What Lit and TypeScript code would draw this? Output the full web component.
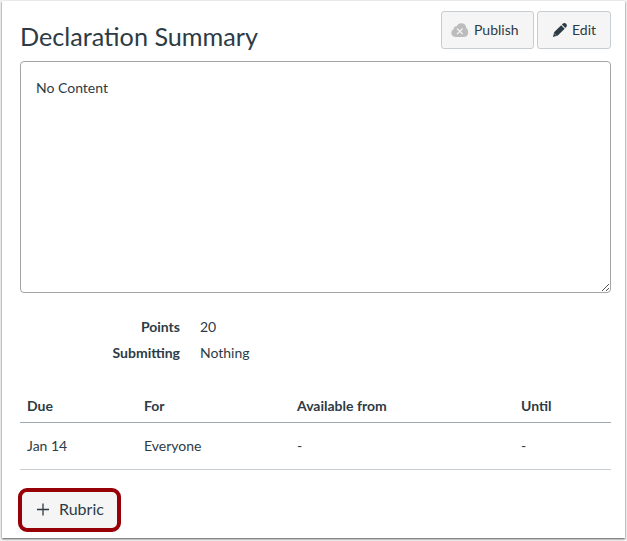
import { LitElement, html, css, svg } from "lit";
import { customElement } from "lit/decorators.js";

const cloudIcon = html`<svg class="cloud" viewBox="0 0 18 16" width="18" height="16">
  ${svg`<path fill="#bcbcbc" d="M4.500 15C2 15 .3 13.300 .3 11.100C.3 9.300 1.300 7.900 2.700 7.300C2.600 5.300 4 4.100 5.700 4.200C6.500 2.300 8.300 1.200 10.400 1.200C13.500 1.200 15.300 3.400 15.200 6C16.500 6.800 17.200 8.500 17.200 10.300C17.200 13.100 15.600 15 13.200 15Z"/>
  <path stroke="#f5f5f5" stroke-width="1.200" fill="none" d="M6 6.500L11.600 12.100M11.600 6.500L6 12.100"/>`}
</svg>`;

const pencilIcon = html`<svg class="pencil" viewBox="0 0 16 16" width="16" height="16">
  ${svg`<path fill="#2d3b45" d="M.9 15.100L2.100 10.400Q2.300 9.900 2.800 9.400L9.200 3.200L12.700 6.700L6.300 13Q5.800 13.500 5.200 13.700ZM9.900 2.500L10.900 1.600Q12.700 .2 14.200 1.700Q15.700 3.300 14.300 5.100L13.400 6Z"/>
  <path stroke="#f5f5f5" stroke-width=".5" d="M2.300 11.500L4.300 13.600"/>`}
</svg>`;

@customElement("app-root")
export class AppRoot extends LitElement {
  static styles = css`
    :host {
      display: block;
      box-sizing: border-box;
      height: 541px;
      padding: 1px 2px 3px;
      overflow: hidden;
      background: #f4f4f4;
      font: 14px/20px Lato, sans-serif;
      color: #2d3b45;
    }
    * { box-sizing: border-box; }
    .panel {
      height: 537px;
      width: 623px;
      padding: 10px 14px 0 18px;
      background: #fff;
      box-shadow: 0 1px 2px rgba(0, 0, 0, 0.65);
    }
    .head { display: flex; height: 50px; }
    h1 {
      flex: 1;
      margin: 6px 0 0;
      font-size: 25.2px;
      line-height: 38px;
      font-weight: 400;
      white-space: nowrap;
    }
    button {
      display: flex;
      align-items: center;
      height: 38px;
      padding: 0;
      border: 1px solid #c7cdd1;
      border-radius: 3px;
      background: #f5f5f5;
      font: inherit;
      color: inherit;
    }
    .publish { width: 93px; padding-left: 9px; gap: 5px; margin-right: 3px; }
    .edit { width: 74px; padding-left: 14px; gap: 4px; }
    .content {
      position: relative;
      width: 591px;
      height: 232px;
      padding: 16px 15px;
      border: 1px solid #a5a5a5;
      border-radius: 4px;
    }
    .grip { position: absolute; right: 0; bottom: 0; }
    dl {
      display: grid;
      grid-template-columns: 160px 1fr;
      column-gap: 20px;
      grid-auto-rows: 26px;
      margin: 21px 0 0;
      line-height: 26px;
    }
    dt { text-align: right; font-weight: 700; }
    dd { margin: 0; }
    table {
      width: 591px;
      margin-top: 24px;
      table-layout: fixed;
      border-collapse: separate;
      border-spacing: 0;
    }
    th, td { padding: 0 7px; text-align: left; }
    th { height: 33px; border-bottom: 1px solid #a0a8b0; font-weight: 700; }
    td { height: 47px; border-bottom: 1px solid #c7cdd1; }
    .due { width: 117px; }
    .for { width: 153px; }
    .from { width: 224px; }
    .rubric {
      width: 103px;
      height: 44px;
      margin: 18px 0 0 -2px;
      padding: 0 0 2px 14px;
      gap: 9px;
      border: 4px solid #960006;
      border-radius: 9px;
      font-size: 16px;
    }
  `;

  render() {
    return html`
      <main class="panel">
        <header class="head">
          <h1>Declaration Summary</h1>
          <button class="publish">${cloudIcon}<span>Publish</span></button>
          <button class="edit">${pencilIcon}<span>Edit</span></button>
        </header>
        <section class="content">
          No Content
          <svg class="grip" width="9" height="9" viewBox="0 0 9 9">
            <path stroke="#555" fill="none" d="M1 8L8 1M5 8L8 5" />
          </svg>
        </section>
        <dl>
          <dt>Points</dt><dd>20</dd>
          <dt>Submitting</dt><dd>Nothing</dd>
        </dl>
        <table>
          <thead>
            <tr><th class="due">Due</th><th class="for">For</th><th class="from">Available from</th><th>Until</th></tr>
          </thead>
          <tbody>
            <tr><td>Jan 14</td><td>Everyone</td><td>-</td><td>-</td></tr>
          </tbody>
        </table>
        <button class="rubric">
          <svg width="14" height="14" viewBox="0 0 14 14">
            <path stroke="#2d3b45" stroke-width="1.300" d="M1 7.500H13M7 1.500V13.500" />
          </svg>
          <span>Rubric</span>
        </button>
      </main>
    `;
  }
}
